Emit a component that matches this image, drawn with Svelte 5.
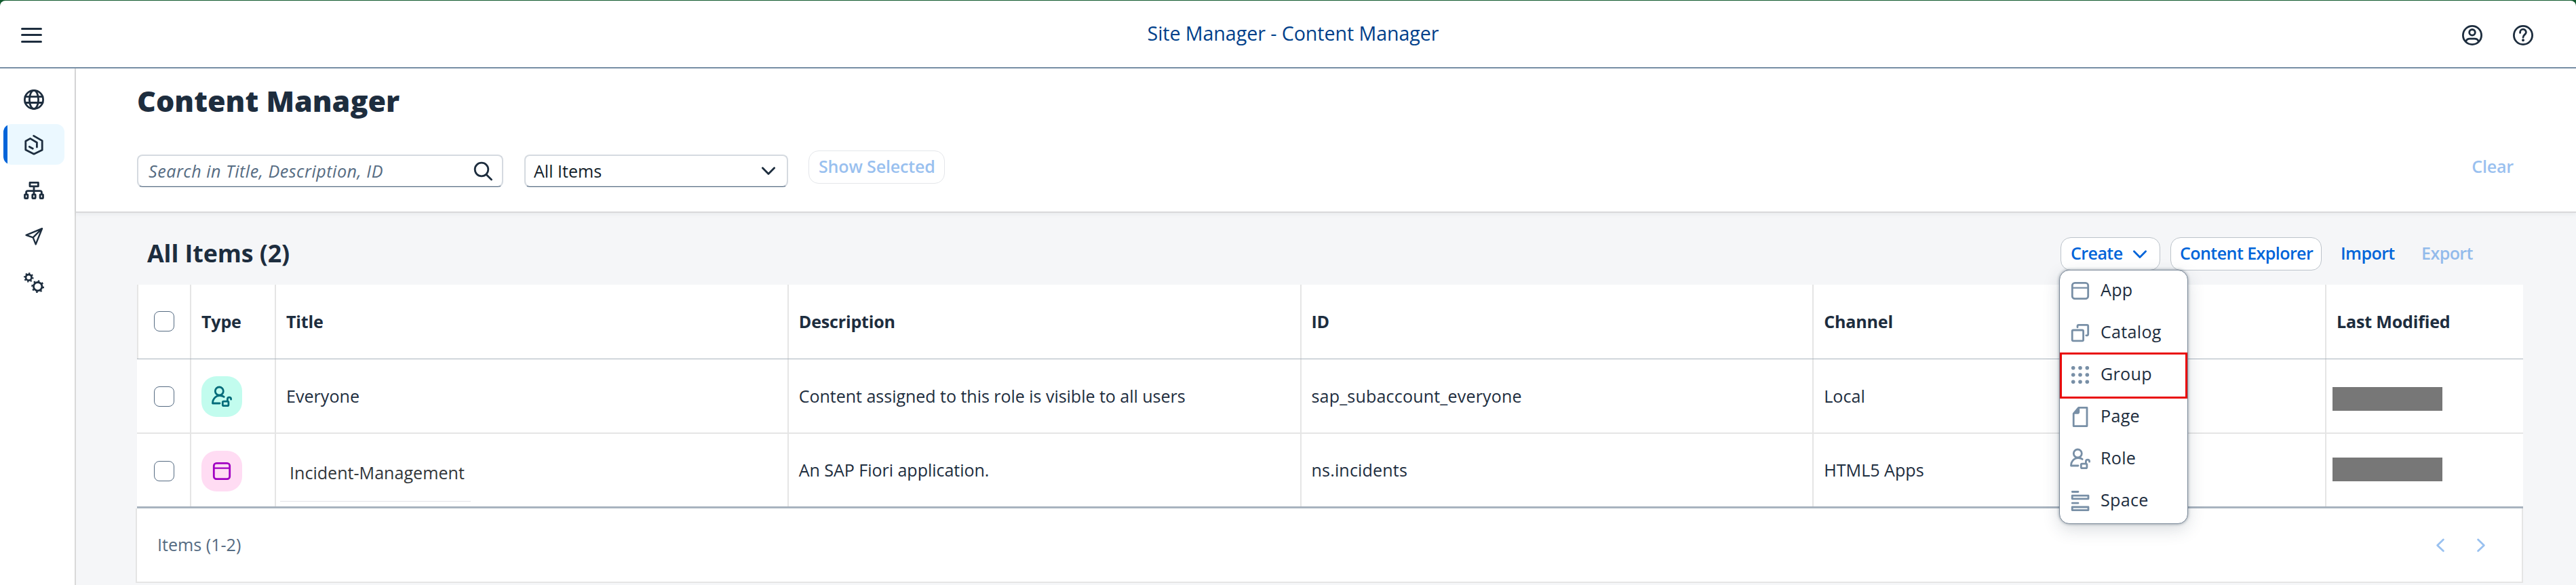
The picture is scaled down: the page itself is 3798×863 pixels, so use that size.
<script>
  const nav = ['globe', 'hexagon', 'tree', 'plane', 'gears'];
  const columns = ['Type', 'Title', 'Description', 'ID', 'Channel', 'Last Modified'];
  const rows = [
    { icon: 'role', tone: 'teal', title: 'Everyone', description: 'Content assigned to this role is visible to all users', id: 'sap_subaccount_everyone', channel: 'Local' },
    { icon: 'app', tone: 'pink', title: 'Incident-Management', edited: true, description: 'An SAP Fiori application.', id: 'ns.incidents', channel: 'HTML5 Apps' }
  ];
  const menu = [
    ['app', 'App'],
    ['catalog', 'Catalog'],
    ['group', 'Group'],
    ['page', 'Page'],
    ['role', 'Role'],
    ['space', 'Space']
  ];
</script>

{#snippet icon(name)}
  <svg class="icon" viewBox="0 0 30 30" width="30" height="30" aria-hidden="true">
    {#if name === 'globe'}
      <circle cx="15" cy="15" r="13.6" /><ellipse cx="15" cy="15" rx="6.6" ry="13.6" />
      <path d="M2 10.6H28M2 19.5H28" />
    {:else if name === 'hexagon'}
      <path d="M14.6 2.4L27.2 9.6V23.2L15 29.2L2.8 23V10.3L9.6 6.4L19.4 12.2V19M8.3 18.4L13.4 21.2" />
    {:else if name === 'tree'}
      <path d="M9 3.4H21.4V8.8H9ZM15 9V20M3.6 20V18Q3.6 15.7 6 15.7H24Q26.4 15.7 26.4 18V20" />
      <rect x="1.5" y="20.8" width="4.4" height="5.8" rx="0.8" /><rect x="12.8" y="20.8" width="4.4" height="5.8" rx="0.8" /><rect x="24.1" y="20.8" width="4.4" height="5.8" rx="0.8" />
    {:else if name === 'plane'}
      <path class="thin" d="M27 3.2L3.6 12.8L13.7 16.4L17.7 26.4ZM13.7 16.4L27 3.2" />
    {:else if name === 'gears'}
      <circle cx="7.3" cy="7.3" r="4.3" /><circle class="teeth" cx="7.3" cy="7.3" r="6.2" pathLength="80" stroke-dasharray="4.4 5.6" />
      <circle cx="20.7" cy="20.7" r="6.2" /><circle class="teeth" cx="20.7" cy="20.7" r="8.3" pathLength="80" stroke-dasharray="4 6" />
    {:else if name === 'menu'}
      <path class="bar" d="M1.5 5.5H29.5M1.5 14.6H29.5M1.5 24.6H29.5" />
    {:else if name === 'user'}
      <circle cx="15" cy="15" r="13.6" /><circle cx="15" cy="10.8" r="4.3" />
      <path d="M5.6 24.5C6.6 21 9 20.2 11.6 20.2H18.4C21 20.2 23.4 21 24.4 24.5" />
    {:else if name === 'help'}
      <circle cx="15" cy="15" r="13.6" />
      <path d="M10.6 11.4V10.6a4.4 4.4 0 0 1 8.8 0C19.4 14.2 15 14.2 15 18.2" /><circle class="solid" cx="15" cy="22.2" r="2" />
    {:else if name === 'search'}
      <circle cx="12" cy="12" r="9.8" /><path d="M19 19.4L26.6 27" />
    {:else if name === 'down'}
      <path d="M6.4 9.8L15 18.6L23.6 9.8" />
    {:else if name === 'prev'}
      <path d="M19.4 7L10.6 15.4L19.4 23.8" />
    {:else if name === 'next'}
      <path d="M10.6 7L19.4 15.4L10.6 23.8" />
    {:else if name === 'app'}
      <rect x="3.3" y="3.3" width="23.4" height="23.4" rx="3.8" /><path class="thin" d="M3.3 10.6H26.7" />
    {:else if name === 'catalog'}
      <rect x="3.2" y="11" width="16.4" height="15.8" rx="1.6" /><path d="M11 6.8V5Q11 3.3 12.8 3.3H25Q26.7 3.3 26.7 5V16.8Q26.7 18.8 25 18.8H23.8" />
    {:else if name === 'group'}
      {#each [4.7, 15, 25.3] as y}{#each [4.7, 15, 25.3] as x}<circle class="solid" cx={x} cy={y} r="2.8" />{/each}{/each}
    {:else if name === 'page'}
      <path d="M12.6 1.4H25V28.6H5.2V10.2Z" /><path class="solid" d="M13 1.6H14.2V7.4Q14.2 10.8 10.8 10.8H5.2Z" />
    {:else if name === 'role'}
      <circle cx="11.3" cy="7" r="6" />
      <path d="M18.2 15.4C14.8 12.8 8.6 12.8 5.4 16C2.4 18.8 1.5 21.4 1.5 25H12" />
      <rect x="16.3" y="22.2" width="8.6" height="6.4" rx="1.4" /><path d="M23.4 21.8V18.8a2.6 2.6 0 0 1 5.2 0V19.2" />
    {:else if name === 'space'}
      <path d="M3.3 1.5H12M3.3 18.2H12" /><rect x="3.2" y="7.2" width="23.8" height="4.6" /><rect x="3.2" y="24" width="23.8" height="4.6" />
    {/if}
  </svg>
{/snippet}

<div class="shell">
  <header class="topbar">
    <button class="plain">{@render icon('menu')}</button>
    <div class="app-title">Site Manager - Content Manager</div>
    <div class="actions">
      <button class="plain">{@render icon('user')}</button>
      <button class="plain">{@render icon('help')}</button>
    </div>
  </header>

  <div class="body">
    <nav>
      {#each nav as name}
        <button class="plain nav-item" class:first={name === 'globe'} class:selected={name === 'hexagon'}>{@render icon(name)}</button>
      {/each}
    </nav>

    <main>
      <section class="page-head">
        <h1>Content Manager</h1>
        <div class="filters">
          <div class="field search"><em>Search in Title, Description, ID</em>{@render icon('search')}</div>
          <div class="field select"><span>All Items</span>{@render icon('down')}</div>
          <button class="button ghost"><span>Show Selected</span></button>
          <button class="button text clear"><span>Clear</span></button>
        </div>
      </section>

      <section class="content">
        <div class="toolbar">
          <h2>All Items (2)</h2>
          <div class="create">
            <button class="button"><span>Create</span>{@render icon('down')}</button>
            <div class="menu">
              {#each menu as [name, label]}
                <div class="menu-item" class:marked={name === 'group'}>{@render icon(name)}<span>{label}</span></div>
              {/each}
            </div>
          </div>
          <button class="button explorer"><span>Content Explorer</span></button>
          <button class="button text import"><span>Import</span></button>
          <button class="button text export"><span>Export</span></button>
        </div>

        <div class="table">
          <div class="row head">
            <div class="cell check"><i class="checkbox"></i></div>
            {#each columns as c}<div class="cell"><span>{c}</span></div>{/each}
          </div>
          {#each rows as r}
            <div class="row">
              <div class="cell check"><i class="checkbox"></i></div>
              <div class="cell"><div class="badge {r.tone}">{@render icon(r.icon)}</div></div>
              <div class="cell" class:edited={r.edited}><span>{r.title}</span></div>
              <div class="cell desc"><span>{r.description}</span></div>
              <div class="cell id"><span>{r.id}</span></div>
              <div class="cell"><span>{r.channel}</span></div>
              <div class="cell modified"><div class="redacted"></div></div>
            </div>
          {/each}
        </div>

        <footer>
          <span>Items (1-2)</span>
          <div class="pager">{@render icon('prev')}{@render icon('next')}</div>
        </footer>
      </section>
    </main>
  </div>
</div>

<style>
  :global(body) { margin: 0; }
  .shell, .shell * { box-sizing: border-box; }
  .shell {
    width: 3798px; height: 863px; overflow: hidden; padding-top: 1px;
    display: flex; flex-direction: column; background: #125a2e; color: #1d2d3e;
    font-family: 'Open Sans', 'Noto Sans', sans-serif; font-size: 25.1px; line-height: 34px; white-space: nowrap;
  }
  button { font: inherit; margin: 0; padding: 0; border: 0; background: none; color: inherit; }
  h1, h2 { margin: 0; }
  .icon { display: block; flex: none; fill: none; stroke: currentColor; stroke-width: 2.8; stroke-linecap: round; stroke-linejoin: round; overflow: visible; }
  .icon .thin { stroke-width: 2.4; }
  .icon .bar { stroke-width: 3; }
  .icon .solid { fill: currentColor; stroke: none; }
  .icon .teeth { stroke-width: 2.2; stroke-linecap: butt; }

  .topbar {
    height: 100px; flex: none; display: grid; grid-template-columns: 1fr auto 1fr; align-items: center;
    padding: 4px 16px 0 31px; background: #fff; border-bottom: 2px solid #788fa6; border-radius: 8px 8px 0 0;
  }
  .app-title { font-size: 28.65px; line-height: 40px; margin-top: -7px; color: #00408a; letter-spacing: -0.07px; }
  .actions { display: flex; gap: 45px; justify-content: flex-end; margin-right: 47px; }

  .body { flex: 1; min-height: 0; display: flex; }
  nav { width: 112px; flex: none; background: #fff; border-right: 2px solid #d9d9d9; padding: 14px 0 0 5px; display: flex; flex-direction: column; gap: 8px; }
  .nav-item { width: 90px; height: 60px; display: flex; align-items: center; justify-content: center; border-radius: 12px; }
  .nav-item.selected { background: linear-gradient(90deg, #0064d9 6px, #ebf8ff 6px); }
  .nav-item.first { padding-top: 4px; }

  main { flex: 1; min-width: 0; display: flex; flex-direction: column; background: #f5f6f8; }
  .page-head { height: 213px; flex: none; padding: 20px 78px 0 90px; background: #fff; border-bottom: 2px solid #d9d9db; box-shadow: 0 2px 6px rgba(34, 53, 72, 0.06); }
  h1 { font-size: 43px; font-weight: 800; line-height: 56px; letter-spacing: 0.02px; }
  .filters { display: flex; align-items: flex-start; margin-top: 45px; }
  .field {
    height: 48px; margin-top: 6px; padding: 0 0 2px 15px; display: flex; align-items: center; justify-content: space-between;
    border: 2px solid #d5dae0; border-bottom: 1px solid #556b82; border-radius: 8px; background: #fff; box-shadow: inset 0 -1px 0 #d5dae0;
  }
  .field .icon { margin-top: 2px; }
  .search { width: 540px; padding-right: 12px; color: #1d2d3e; }
  .search em { color: #556b82; letter-spacing: 0.52px; }
  .select { width: 389px; margin-left: 31px; padding: 0 12px 2px 12px; color: #131e29; }
  .select .icon { color: #1d2d3e; }
  .button {
    height: 49px; padding: 0 14px 3px; display: flex; align-items: center; color: #0064d9; font-weight: 600; letter-spacing: -0.6px;
    background: #fff; border: 1px solid #bcc3ca; border-radius: 15px;
  }
  .button.text { background: none; border-color: transparent; }
  .button.ghost { width: 201px; margin-left: 30px; border-color: #e4e6ea; letter-spacing: -0.2px; }
  .ghost span, .clear span, .export span { opacity: 0.4; }
  .button.clear { margin-left: auto; padding-right: 13px; letter-spacing: -0.2px; }

  .content { padding: 0 78px 0 88px; }
  .toolbar { height: 106px; padding: 36px 0 0 17px; display: flex; align-items: flex-start; }
  h2 { flex: 1; font-size: 35.8px; line-height: 46px; font-weight: 700; letter-spacing: -0.1px; }
  .create { position: relative; }
  .create .button { width: 147px; justify-content: space-between; }
  .create .button .icon { margin-top: 5px; }
  .explorer { width: 223px; margin-left: 15px; padding-left: 13px; }
  .import { width: 104px; margin-left: 14px; padding-left: 13px; }
  .export { width: 164px; margin-left: 15px; padding-left: 13px; }

  .menu {
    position: absolute; left: -2px; top: 48px; width: 190px; height: 375px; z-index: 2; padding-top: 2px;
    display: flex; flex-direction: column; gap: 10px; background: #fff;
    border: 1px solid #7c8a9a; border-radius: 15px; box-shadow: 0 0 4px rgba(34, 53, 72, 0.45), 0 8px 24px rgba(34, 53, 72, 0.17);
  }
  .menu-item { height: 52px; padding-left: 15px; display: flex; align-items: center; gap: 15px; position: relative; }
  .menu-item .icon { color: #788fa6; margin-top: 4px; }
  .menu-item span { letter-spacing: 0.3px; }
  .marked::after { content: ''; box-sizing: border-box; position: absolute; left: 0; top: -5px; width: 188px; height: 68px; border: 3px solid #e90b0b; }

  .table { margin-left: 2px; background: #fff; border-bottom: 3px solid #a8b3bf; }
  .row { display: grid; grid-template-columns: 80px 125px repeat(4, 755.75px) 1fr; height: 110px; border-bottom: 2px solid #e5e5e5; }
  .row:last-child { height: 107px; border-bottom: 0; }
  .row.head { border-bottom: 1px solid #a8b3bd; font-weight: 700; letter-spacing: -0.2px; }
  .cell { display: flex; align-items: center; padding: 2px 0 0 15px; border-right: 2px solid #e5e5e5; }
  .cell span { margin-top: -3px; }
  .row.head .cell { padding-top: 0; padding-bottom: 2px; }
  .row.head .cell span { margin-top: 0; }
  .row.head .check { border-left: 2px solid #e5e5e5; padding: 0 0 1px 23px; }
  .cell:last-child { border-right: 0; }
  .row .check { padding-left: 25px; }
  .row.head .check { padding-left: 23px; }
  .desc { letter-spacing: -0.06px; }
  .id { letter-spacing: 0.15px; }
  .checkbox { width: 30px; height: 30px; border: 1px solid #556b82; border-radius: 8px; background: #fff; }
  .badge { width: 60px; height: 60px; border-radius: 22px; display: flex; align-items: center; justify-content: center; }
  .teal { background: #c2fcee; color: #046c7a; }
  .pink { background: #ffdcf3; color: #a100c2; }
  .edited { padding: 16px 0 0 6px; align-items: flex-start; }
  .edited span { width: 281px; height: 84px; margin: 0; padding: 24px 0 0 14px; border-bottom: 1px solid #e2e2e6; color: #32363a; }
  .modified { padding: 9px 0 0 9px; }
  .row:last-child .modified { padding-top: 0; padding-bottom: 2px; }
  .redacted { width: 162px; height: 35px; background: #777; }

  footer {
    height: 110px; padding: 0 45px 3px 30px; display: flex; align-items: center; justify-content: space-between;
    background: #fff; border: 2px solid #e5e5e5; border-top: 0; color: #556b82;
  }
  .pager { display: flex; gap: 30px; color: #99c1f0; padding-top: 2px; }
</style>
